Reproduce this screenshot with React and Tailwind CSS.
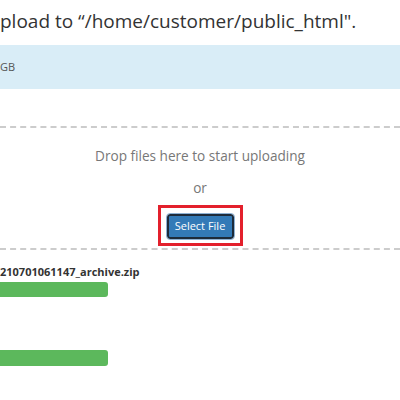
export default function App() {
  return (
    <main className="h-[400px] w-[400px] overflow-hidden bg-white font-['Open_Sans',sans-serif] text-[#333]">
      <h1 className="mt-[7px] whitespace-nowrap text-[19px] leading-[28px]">
        pload to “/home/customer/public_html".
      </h1>

      {/* Quota notice */}
      <div className="mt-[10px] flex h-[44px] items-center bg-[#d9edf7] text-[11px] text-[#555]">
        GB
      </div>

      {/* Drop zone */}
      <section className="mt-[37px] flex flex-col items-center border-y-2 border-dashed border-[#ccc] pb-[2px] pt-[18px]">
        <p className="text-[13.6px] leading-[20px] text-[#777]">Drop files here to start uploading</p>
        <p className="mt-[12px] text-[13.6px] leading-[20px] text-[#777]">or</p>
        <div className="mt-[7px] border-[3px] border-[#e3202c] px-[6px] py-[4px]">
          <button className="h-[25px] w-[67px] rounded-[3px] border-2 border-[#1d2b3a] bg-[#337ab7] text-[11px] text-white outline outline-1 outline-[#8eb1d3]">
            Select File
          </button>
        </div>
      </section>

      {/* Upload list */}
      <div className="mt-[14px]">
        <div className="text-[11px] font-bold leading-[16px]">210701061147_archive.zip</div>
        <div className="mt-[2px] h-[15px] w-[108px] rounded-r-[3px] bg-[#5cb85c]" />
        <div className="mt-[53px] h-[16px] w-[108px] rounded-r-[3px] bg-[#5cb85c]" />
      </div>
    </main>
  );
}
